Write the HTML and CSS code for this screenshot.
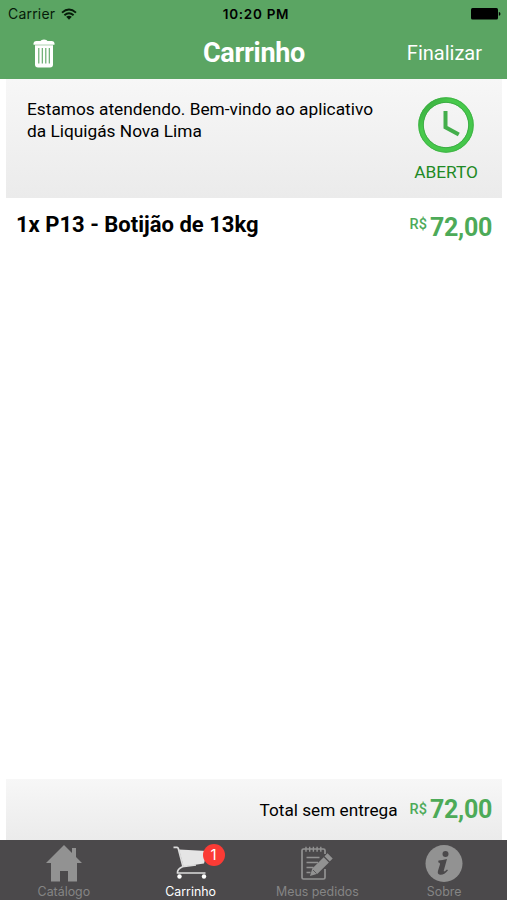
FILE: index.html
```
<!DOCTYPE html>
<html lang="pt-BR">
<head>
    <meta charset="UTF-8">
    <meta name="viewport" content="width=device-width, initial-scale=1.0">
    <title>Carrinho</title>
    <link rel="stylesheet" href="styles.css">
</head>
<body>
    <header class="header">
        <div class="status-bar">
            <div class="carrier">
                <span>Carrier</span>
                <svg class="wifi" width="16" height="12" viewBox="0 0 16 12">
                    <path d="M1 4.6Q8-1.6 15 4.6M3.4 7.2Q8 3.2 12.6 7.2" fill="none" stroke="#061b09" stroke-width="1.9"/>
                    <path d="M5.2 8.8Q8 6.6 10.8 8.8L8 11.7z" fill="#061b09"/>
                </svg>
            </div>
            <span class="time">10:20 PM</span>
            <svg class="battery" width="30" height="12" viewBox="0 0 30 12">
                <rect width="27" height="11.5" rx="1.5"/>
                <path d="M27.8 4q1.7.3 1.7 1.9t-1.7 1.9z"/>
            </svg>
        </div>
        <div class="nav-bar">
            <button class="trash" aria-label="Esvaziar">
                <svg width="22" height="29" viewBox="0 0 22 29">
                    <path d="M.5 5.8V4.2Q.5 2.2 3 2h4.5Q8 .5 11 .5T14.5 2H19q2.5.2 2.5 2.2v1.6z" fill="#fff"/>
                    <path d="M2 6.3h18v19.2q0 3-3 3H5q-3 0-3-3z" fill="#fff"/>
                    <path d="M5.8 9v15.500M9.300 9v15.500M12.800 9v15.500M16.300 9v15.500" stroke="#5ba563" stroke-width="1.1"/>
                </svg>
            </button>
            <h1>Carrinho</h1>
            <button class="finish">Finalizar</button>
        </div>
    </header>

    <main class="content">
        <section class="welcome">
            <p class="message">Estamos atendendo. Bem-vindo ao aplicativo<br>da Liquigás Nova Lima</p>
            <div class="store-status">
                <svg width="58" height="58" viewBox="0 0 58 58">
                    <defs>
                        <linearGradient id="ring" x1="0" y1="0" x2="1" y2="1">
                            <stop offset="0" stop-color="#35a53b"/>
                            <stop offset=".3" stop-color="#48ca4c"/>
                            <stop offset="1" stop-color="#43c54a"/>
                        </linearGradient>
                    </defs>
                    <circle cx="29" cy="29" r="25" fill="none" stroke="url(#ring)" stroke-width="5.5"/>
                    <circle cx="29" cy="29" r="27.2" fill="none" stroke="#3fae45" stroke-width=".8"/>
                    <circle cx="29" cy="29" r="22.7" fill="none" stroke="#3ba544" stroke-width=".8"/>
                    <path d="M28.5 15v16.3l13.3 7.2" fill="none" stroke="#43ae4b" stroke-width="4"/>
                </svg>
                <span>ABERTO</span>
            </div>
        </section>

        <section class="item">
            <h2>1x P13 - Botijão de 13kg</h2>
            <div class="price"><span class="currency">R$</span><span class="value">72,00</span></div>
        </section>

        <section class="total">
            <span class="total-label">Total sem entrega</span>
            <div class="price"><span class="currency">R$</span><span class="value">72,00</span></div>
        </section>
    </main>

    <nav class="tab-bar">
        <a class="tab">
            <svg width="38" height="38" viewBox="0 0 38 38">
                <path d="M19 0l8 8V3h4v9l6 6h-5v18.5h-9V26h-8v10.5H6V18H1z" fill="#929292"/>
            </svg>
            <span>Catálogo</span>
        </a>
        <a class="tab active">
            <div class="cart-icon">
                <svg width="38" height="38" viewBox="0 0 38 38">
                    <path d="M7 4.5L35 6l-3 12.5-20.500 3z" fill="#e5e5e5"/>
                    <path d="M1.500 2.300H5q1 0 1.300 1.200L11 21.500l13-1.500M11 21.500q-6 2.500-5.500 6.500h28" fill="none" stroke="#dcdcdc" stroke-width="1.700"/>
                    <circle cx="7.500" cy="31.500" r="2.200" fill="#fff"/>
                    <circle cx="32" cy="31.500" r="2.200" fill="#fff"/>
                </svg>
                <span class="badge">1</span>
            </div>
            <span>Carrinho</span>
        </a>
        <a class="tab">
            <svg width="38" height="38" viewBox="0 0 38 38">
                <path d="M27 9V5.5q0-1.5-1.5-1.5h-20Q4 4 4 5.5v27Q4 34 5.5 34h20q1.5 0 1.5-1.5V24" fill="none" stroke="#929292" stroke-width="1.7"/>
                <path d="M8 1.7v5M11.7 1.7v5M15.4 1.7v5M19.1 1.7v5M22.8 1.7v5" stroke="#929292" stroke-width="1.4"/>
                <path d="M8.5 12.5H21.500M8.500 17.500H20M8.500 22.500h7M8.500 27.500h4" stroke="#929292" stroke-width="1.5"/>
                <path d="M29.500 8.300l5.200 5.200-3 3-5.200-5.200zM25.700 12.200l5.200 5.200-11.400 11.300-7.500 2.300 2.300-7.500z" fill="#929292"/>
                <path d="M15 25l3.500 3.500" stroke="#4b494b" stroke-width=".8"/>
            </svg>
            <span>Meus pedidos</span>
        </a>
        <a class="tab">
            <svg width="38" height="38" viewBox="0 0 38 38">
                <circle cx="19" cy="18.5" r="18.5" fill="#929292"/>
                <circle cx="20.5" cy="9" r="3" fill="#4b494b"/>
                <path d="M13.5 15.5q4-.2 8.500-1.500l-3.200 11.500q-.5 2.300 3.200-1l1 .8q-4 5-8 4.500-3-.6-2-4l2-6.500q.4-1.600-1.800-2z" fill="#4b494b"/>
            </svg>
            <span>Sobre</span>
        </a>
    </nav>
</body>
</html>
```

FILE: styles.css
```
* {
    box-sizing: border-box;
}
body {
    display: flex;
    flex-direction: column;
    height: 900px;
    margin: 0;
    background: #fff;
    color: #000;
    font-family: Roboto, sans-serif;
}
h1, h2, p {
    margin: 0;
}
button {
    padding: 0;
    border: none;
    background: none;
    color: #fff;
    font-family: inherit;
}
svg {
    display: block;
}
.header {
    height: 79px;
    background: #5ba563;
}
.status-bar {
    display: grid;
    grid-template-columns: 1fr auto 1fr;
    align-items: center;
    height: 27px;
    padding: 0 6px 0 8px;
    color: #061b09;
    font-family: Inter, sans-serif;
    font-size: 14px;
}
.carrier {
    display: flex;
    align-items: center;
    gap: 6px;
    letter-spacing: 0.2px;
}
.time {
    padding-left: 3px;
    color: #000;
    font-weight: 600;
    font-size: 13.5px;
    letter-spacing: 0.7px;
}
.battery {
    justify-self: end;
}
.nav-bar {
    display: grid;
    grid-template-columns: 1fr auto 1fr;
    align-items: center;
    height: 52px;
    padding: 0 25px 0 33px;
}
.trash {
    justify-self: start;
}
.nav-bar h1 {
    margin: 0 7px 0 0;
    color: #fff;
    font-size: 27px;
    font-weight: 700;
    letter-spacing: -0.3px;
    line-height: 32px;
}
.finish {
    justify-self: end;
    font-size: 20px;
}
.content {
    display: flex;
    flex: 1;
    flex-direction: column;
    padding: 0 5px 0 6px;
}
.welcome {
    display: flex;
    justify-content: space-between;
    height: 119px;
    padding: 17px 24px 0 21px;
    background: linear-gradient(#f7f7f7, #ebebeb);
}
.message {
    padding-top: 2px;
    font-size: 17.3px;
    line-height: 22px;
    white-space: nowrap;
}
.store-status {
    display: flex;
    flex-direction: column;
    align-items: center;
    gap: 8px;
    color: #1f8a25;
    font-size: 17.3px;
    line-height: 20px;
}
.item {
    display: flex;
    flex: 1;
    justify-content: space-between;
    padding: 12px 10px 0;
}
.item h2 {
    font-size: 22px;
    font-weight: 700;
    line-height: 30px;
}
.price {
    display: flex;
    align-items: flex-start;
    gap: 3px;
    color: #4daa58;
}
.currency {
    font-size: 14.5px;
    font-weight: 500;
    line-height: 30px;
}
.value {
    font-size: 25px;
    font-weight: 700;
    letter-spacing: -0.3px;
    line-height: 35px;
}
.total {
    display: flex;
    align-items: center;
    justify-content: flex-end;
    gap: 12px;
    height: 61px;
    padding: 1px 10px 0 0;
    background: linear-gradient(#f7f7f7, #ebebeb);
}
.total-label {
    font-size: 17.2px;
}
.total .currency {
    line-height: 36px;
}
.tab-bar {
    display: grid;
    grid-template-columns: repeat(4, 1fr);
    height: 60px;
    background: #4b494b;
}
.tab {
    display: flex;
    flex-direction: column;
    align-items: center;
    padding: 5px 0 0 1px;
    color: #858585;
    font-family: Inter, sans-serif;
    font-size: 12.4px;
    line-height: 18px;
    white-space: nowrap;
}
.tab.active {
    color: #fff;
}
.cart-icon {
    position: relative;
}
.badge {
    position: absolute;
    top: -1px;
    left: 31px;
    width: 22px;
    height: 22px;
    border-radius: 50%;
    background: #fb3b35;
    font-size: 15px;
    line-height: 22px;
    text-align: center;
}
```
